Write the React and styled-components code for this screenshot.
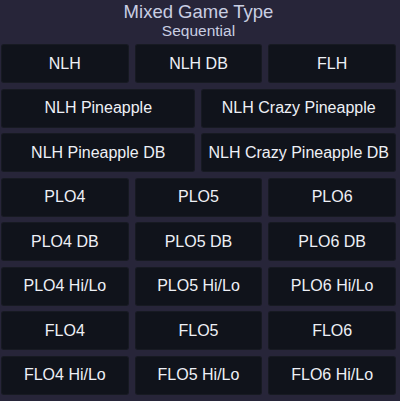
import styled, { createGlobalStyle } from "styled-components";

const GlobalStyle = createGlobalStyle`
  html, body {
    margin: 0;
    padding: 0;
    background: #272539;
  }
  body {
    font-family: "Liberation Sans", Arial, sans-serif;
  }
`;

const Page = styled.div`
  width: 400px;
  height: 401px;
  box-sizing: border-box;
  padding: 0 4px 0 1px;
  background: #272539;
  overflow: hidden;
`;

const Header = styled.div`
  height: 44px;
  box-sizing: border-box;
  padding-top: 1px;
  display: flex;
  flex-direction: column;
  align-items: center;
  color: #c9cee2;
`;

const Title = styled.div`
  font-size: 18.5px;
  line-height: 21px;
`;

const Subtitle = styled.div`
  font-size: 15.5px;
  line-height: 18px;
`;

const Grid = styled.div`
  display: grid;
  grid-template-columns: repeat(6, 1fr);
  grid-auto-rows: 39px;
  column-gap: 6px;
  row-gap: 5.5px;
`;

const GameButton = styled.button`
  grid-column: span ${(p) => p.$span};
  background: #10131b;
  border: none;
  border-radius: 3px;
  box-shadow: inset 0 0 0 1px rgba(255, 255, 255, 0.03);
  color: #eef0f6;
  font-family: "Liberation Sans", Arial, sans-serif;
  font-size: 16px;
  padding: 0;
  cursor: pointer;
  white-space: nowrap;
`;

const rows = [
  ["NLH", "NLH DB", "FLH"],
  ["NLH Pineapple", "NLH Crazy Pineapple"],
  ["NLH Pineapple DB", "NLH Crazy Pineapple DB"],
  ["PLO4", "PLO5", "PLO6"],
  ["PLO4 DB", "PLO5 DB", "PLO6 DB"],
  ["PLO4 Hi/Lo", "PLO5 Hi/Lo", "PLO6 Hi/Lo"],
  ["FLO4", "FLO5", "FLO6"],
  ["FLO4 Hi/Lo", "FLO5 Hi/Lo", "FLO6 Hi/Lo"],
];

export default function App() {
  return (
    <Page>
      <GlobalStyle />
      <Header>
        <Title>Mixed Game Type</Title>
        <Subtitle>Sequential</Subtitle>
      </Header>
      <Grid>
        {rows.map((row) =>
          row.map((name) => (
            <GameButton key={name} $span={6 / row.length}>
              {name}
            </GameButton>
          ))
        )}
      </Grid>
    </Page>
  );
}
